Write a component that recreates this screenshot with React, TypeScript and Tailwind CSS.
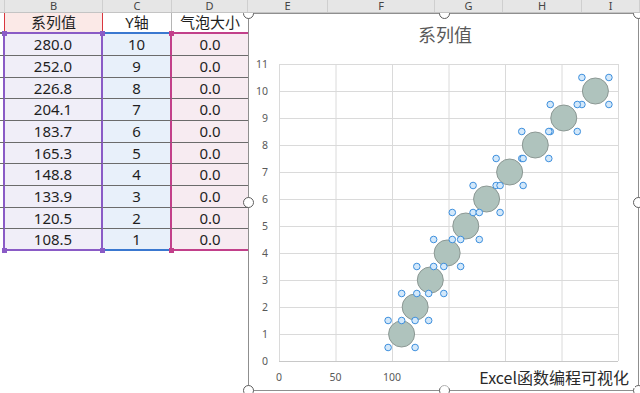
import React from "react";

const data: [string, string][] = [
  ["280.0", "10"],
  ["252.0", "9"],
  ["226.8", "8"],
  ["204.1", "7"],
  ["183.7", "6"],
  ["165.3", "5"],
  ["148.8", "4"],
  ["133.9", "3"],
  ["120.5", "2"],
  ["108.5", "1"],
];
const rowH = ["h-[22px]", "h-[22px]", "h-[21px]", "h-[22px]", "h-[22px]", "h-[21px]", "h-[22px]", "h-[22px]", "h-[21px]", "h-[22px]"];

const cols = [
  { l: "", w: "w-[5px]" },
  { l: "B", w: "w-[98px]" },
  { l: "C", w: "w-[69px]" },
  { l: "D", w: "w-[76px]" },
  { l: "E", w: "w-[80px]" },
  { l: "F", w: "w-[107px]" },
  { l: "G", w: "w-[68px]" },
  { l: "H", w: "w-[79px]" },
  { l: "I", w: "flex-1" },
];

const PL = 30, PR = 369, PT = 50, PB = 347;
const yU = (PB - PT) / 11;
const xS = (PR - PL) / 300;
const px = (v: number) => PL + v * xS;
const py = (v: number) => PB - v * yU;

function Chart() {
  const pts = data.map(([x, y]) => [px(parseFloat(x)), py(parseInt(y))]);
  const r = 13.5;
  return (
    <svg width="389" height="376" className="block">
      <text x="196" y="28" textAnchor="middle" fontSize="18" fill="#595959" fontFamily="'Noto Sans CJK SC', sans-serif">系列值</text>
      {Array.from({ length: 12 }, (_, i) => (
        <line key={"h" + i} x1={PL} x2={PR} y1={py(i) + 0.5} y2={py(i) + 0.5} stroke={i === 0 ? "#c8c8c8" : "#dadada"} strokeWidth="1" />
      ))}
      {Array.from({ length: 7 }, (_, i) => (
        <line key={"v" + i} x1={px(i * 50) + 0.5} x2={px(i * 50) + 0.5} y1={PT} y2={PB} stroke="#dadada" strokeWidth="1" />
      ))}
      {Array.from({ length: 12 }, (_, i) => (
        <text key={"yl" + i} x="19" y={py(i) + 4} textAnchor="end" fontSize="10.5" fill="#595959" fontFamily="'Noto Sans', sans-serif">{i}</text>
      ))}
      {[0, 50, 100].map((v) => (
        <text key={"xl" + v} x={px(v)} y="367" textAnchor="middle" fontSize="10.5" fill="#595959" fontFamily="'Noto Sans', sans-serif">{v}</text>
      ))}
      {pts.map(([cx, cy], i) => (
        <circle key={"b" + i} cx={cx} cy={cy} r={r - 0.5} fill="#afc3bd" stroke="#8c9894" strokeWidth="1" />
      ))}
      {pts.map(([cx, cy], i) => (
        <g key={"hd" + i}>
          {[[-1, -1], [1, -1], [-1, 1], [1, 1]].map(([dx, dy], j) => (
            <circle key={j} cx={cx + dx * r} cy={cy + dy * r} r="3.3" fill="#d3e8fa" stroke="#3d8fdd" strokeWidth="1" />
          ))}
        </g>
      ))}
    </svg>
  );
}

const Handle = ({ cls }: { cls: string }) => (
  <div className={`absolute w-[11px] h-[11px] rounded-full bg-white border-[1.5px] border-[#5e5e5e] ${cls}`} />
);

export default function App() {
  return (
    <div className="relative w-[640px] h-[393px] overflow-hidden bg-white font-['Noto_Sans','Noto_Sans_CJK_SC',sans-serif] text-[#1f1f1f]">
      {/* column headers */}
      <div className="relative z-10 flex h-[13px] bg-[#e6e6e6] border-b border-[#c4c4c4]">
        {cols.map((c, i) => (
          <div key={i} className={`${c.w} shrink-0 h-full border-r border-[#cfcfcf] flex items-center justify-center text-[11px] leading-[12px] text-[#444]`}>
            {c.l}
          </div>
        ))}
      </div>

      <div className="flex">
        {/* table */}
        <div className="relative w-[248px] shrink-0">
          {/* header row */}
          <div className="flex h-[21px]">
            <div className="w-[5px] border-r border-r-[#d9363e] border-b-2 border-b-[#6b6b6b]" />
            <div className="w-[98px] bg-[#fbe9e7] border-r border-r-[#d9363e] border-b-2 border-b-[#8a5bc6] flex items-center justify-center text-[15px]">系列值</div>
            <div className="w-[69px] border-r border-r-[#b5b5b5] border-b-2 border-b-[#3a78d0] flex items-center justify-center text-[15px]">Y轴</div>
            <div className="w-[76px] border-b-2 border-b-[#c2408a] flex items-center justify-center text-[15px]">气泡大小</div>
          </div>
          {data.map(([a, b], i) => {
            const last = i === data.length - 1;
            return (
              <div key={i} className={`flex ${rowH[i]}`}>
                <div className={`w-[5px] border-r-2 border-r-[#8a5bc6] ${last ? "border-b-0" : "border-b border-b-[#6b6b6b]"}`} />
                <div className={`w-[98px] bg-[#f0eef8] border-r-2 border-r-[#8a5bc6] ${last ? "border-b-2 border-b-[#8a5bc6]" : "border-b border-b-[#6b6b6b]"} flex items-center justify-center text-[15px]`}>{a}</div>
                <div className={`w-[69px] bg-[#e8f0fa] border-r-2 border-r-[#c2408a] ${last ? "border-b-2 border-b-[#3a78d0]" : "border-b border-b-[#6b6b6b]"} flex items-center justify-center text-[15px]`}>{b}</div>
                <div className={`w-[76px] bg-[#f7ebf1] ${last ? "border-b-2 border-b-[#c2408a]" : "border-b border-b-[#6b6b6b]"} flex items-center justify-center text-[15px]`}>0.0</div>
              </div>
            );
          })}
          {/* range corner squares */}
          <div className="absolute left-[2px] top-[18px] w-[5px] h-[5px] bg-[#8a5bc6]" />
          <div className="absolute left-[100px] top-[18px] w-[5px] h-[5px] bg-[#8a5bc6]" />
          <div className="absolute left-[169px] top-[18px] w-[5px] h-[5px] bg-[#c2408a]" />
          <div className="absolute left-[2px] top-[235px] w-[5px] h-[5px] bg-[#8a5bc6]" />
          <div className="absolute left-[100px] top-[235px] w-[5px] h-[5px] bg-[#8a5bc6]" />
          <div className="absolute left-[169px] top-[235px] w-[5px] h-[5px] bg-[#c2408a]" />
        </div>

        {/* chart */}
        <div className="relative w-[391px] h-[378px] shrink-0 border border-[#8f8f8f] bg-white">
          <Chart />
          <Handle cls="-left-[6px] -top-[6px]" />
          <Handle cls="left-[190px] -top-[6px]" />
          <Handle cls="-right-[6px] -top-[6px]" />
          <Handle cls="-left-[6px] top-[183px]" />
          <Handle cls="-right-[6px] top-[183px]" />
          <Handle cls="-left-[6px] -bottom-[6px]" />
          <Handle cls="left-[190px] -bottom-[6px]" />
          <Handle cls="-right-[6px] -bottom-[6px]" />
        </div>
      </div>

      {/* watermark */}
      <div className="absolute left-[413px] top-[366px] w-[222px] h-[22px] bg-[linear-gradient(to_right,rgba(255,255,255,0),#ffffff_28%)] flex items-center justify-end pr-[6px]">
        <span className="text-[16px] leading-none text-[#2a2a2a] font-['Noto_Sans_CJK_SC',sans-serif]">Excel函数编程可视化</span>
      </div>
    </div>
  );
}
